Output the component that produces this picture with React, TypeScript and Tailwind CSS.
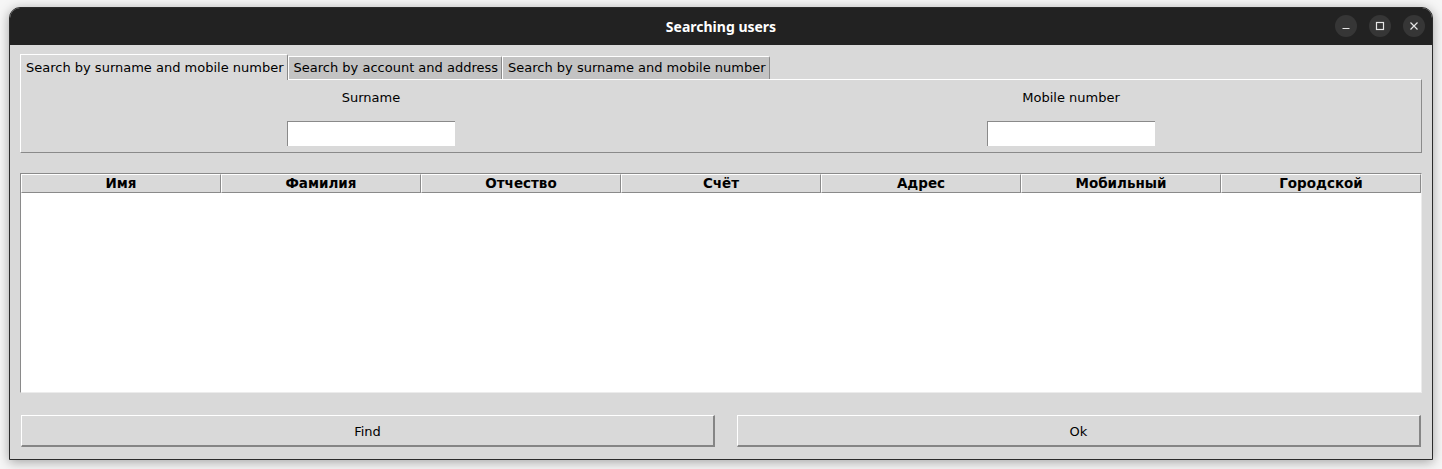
import React from "react";

const columns = ["Имя", "Фамилия", "Отчество", "Счёт", "Адрес", "Мобильный", "Городской"];

const tabs = [
  "Search by surname and mobile number",
  "Search by account and address",
  "Search by surname and mobile number",
];

function TitleButton({ children }: { children: React.ReactNode }) {
  return (
    <div className="w-[22px] h-[22px] rounded-full bg-[#363636] flex items-center justify-center">
      {children}
    </div>
  );
}

function Field({ label }: { label: string }) {
  return (
    <div className="flex-1 flex flex-col items-center">
      <div className="h-[16px] leading-[16px] text-[13px] text-black">{label}</div>
      <input
        className="mt-[15px] w-[168px] h-[25px] bg-white border-t border-l border-[#8a8a8a] border-r-0 border-b-0 outline-none"
        type="text"
      />
    </div>
  );
}

export default function App() {
  return (
    <div
      className="w-[1442px] h-[469px] bg-[#f6f6f6] pt-[7px] pl-[9px]"
      style={{ fontFamily: '"DejaVu Sans", sans-serif' }}
    >
      <div className="w-[1424px] h-[453px] rounded-t-[11px] border border-[#2b2b2b] bg-[#d9d9d9] shadow-[0_2px_12px_rgba(0,0,0,0.35)] flex flex-col overflow-hidden">
        {/* title bar */}
        <div className="h-[37px] bg-[#222222] flex items-center relative shrink-0">
          <div
            className="flex-1 text-center text-white font-bold text-[14px]"
            style={{ fontFamily: '"Noto Sans", "Open Sans", sans-serif' }}
          >
            Searching users
          </div>
          <div className="absolute right-[7px] top-[7px] flex gap-[12px]">
            <TitleButton>
              <svg width="10" height="10" viewBox="0 0 10 10">
                <path d="M1.5 7.5h7" stroke="#e6e6e6" strokeWidth="1.2" />
              </svg>
            </TitleButton>
            <TitleButton>
              <svg width="10" height="10" viewBox="0 0 10 10">
                <rect x="1.5" y="1.5" width="7" height="7" fill="none" stroke="#e6e6e6" strokeWidth="1.2" />
              </svg>
            </TitleButton>
            <TitleButton>
              <svg width="10" height="10" viewBox="0 0 10 10">
                <path d="M1.5 1.5l7 7M8.5 1.5l-7 7" stroke="#e6e6e6" strokeWidth="1.2" />
              </svg>
            </TitleButton>
          </div>
        </div>

        {/* body */}
        <div className="flex-1 flex flex-col px-[10px] pt-[9px] text-[13px] text-black">
          {/* tabs */}
          <div className="flex items-end h-[25px]">
            {tabs.map((t, i) =>
              i === 0 ? (
                <div
                  key={i}
                  className="h-[26px] -mb-px relative z-10 bg-[#d9d9d9] border-t border-l border-white border-r border-r-[#8a8a8a] rounded-tr-[2px] pl-[5px] pr-[3px] pt-[4px] leading-[18px] whitespace-nowrap"
                >
                  {t}
                </div>
              ) : (
                <div
                  key={i}
                  className="h-[23px] bg-[#c3c3c3] border-t border-l border-white border-r border-r-[#8a8a8a] rounded-tr-[2px] pl-[5px] pr-[3px] pt-[2px] leading-[18px] whitespace-nowrap"
                >
                  {t}
                </div>
              )
            )}
          </div>

          {/* tab panel */}
          <div className="h-[74px] border-t border-l border-white border-r border-b border-r-[#8a8a8a] border-b-[#8a8a8a] flex pt-[10px]">
            <Field label="Surname" />
            <Field label="Mobile number" />
          </div>

          {/* table */}
          <div className="mt-[20px] h-[220px] border-t border-l border-[#8a8a8a] border-r border-b border-r-[#ececec] border-b-[#ececec] bg-white flex flex-col">
            <div className="flex h-[19px] bg-[#d9d9d9]">
              {columns.map((c) => (
                <div
                  key={c}
                  className="w-[200px] shrink-0 border-t border-l border-white border-r border-b border-r-[#8a8a8a] border-b-[#8a8a8a] font-bold text-center text-[13.5px] leading-[17px]"
                >
                  {c}
                </div>
              ))}
            </div>
            <div className="flex-1 bg-white" />
          </div>

          {/* buttons */}
          <div className="mt-[22px] flex gap-[22px] pl-px pr-px">
            <button className="w-[694px] h-[32px] pt-[2px] bg-[#d9d9d9] border-t border-l border-white border-r-2 border-b-2 border-r-[#858585] border-b-[#858585] text-[13px]">
              Find
            </button>
            <button className="flex-1 h-[32px] pt-[2px] bg-[#d9d9d9] border-t border-l border-white border-r-2 border-b-2 border-r-[#858585] border-b-[#858585] text-[13px]">
              Ok
            </button>
          </div>
        </div>
      </div>
    </div>
  );
}
